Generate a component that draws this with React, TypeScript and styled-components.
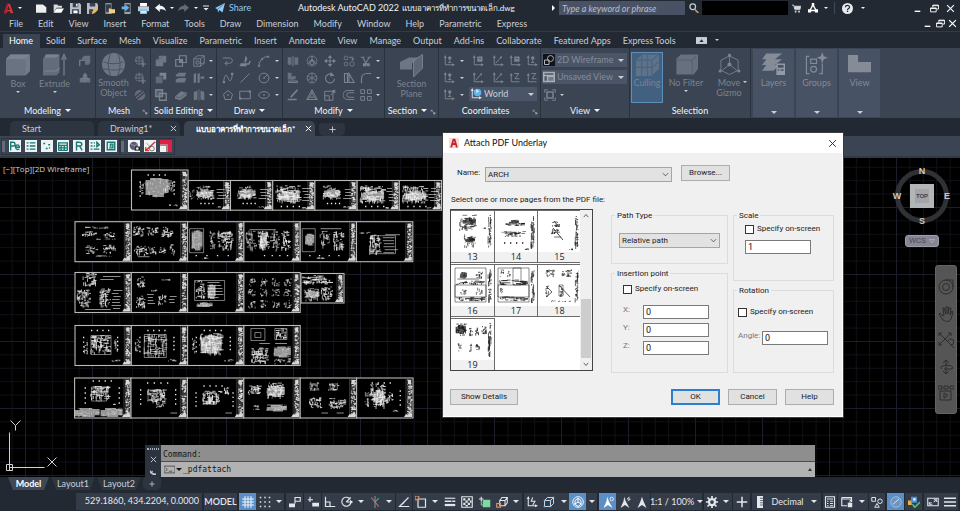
import React, { ReactNode } from "react";
import styled, { createGlobalStyle, css } from "styled-components";

const c = {
  frame: "#222933",
  ribbon: "#3b4453",
  tile: "#475264",
  field: "#4a5568",
  line: "#2a313d",
  text: "#c9ced6",
  bright: "#f1f3f5",
  dim: "#7b8390",
  blue: "#5b8fc7",
};

const ui = `Lato, "Noto Sans", sans-serif`;
const classic = `Roboto, "Liberation Sans", sans-serif`;

const Global = createGlobalStyle`
  *, *::before, *::after { box-sizing: border-box; }
  html, body { margin: 0; background: ${c.frame}; }
  body { font: 9px/12px ${ui}; color: ${c.text}; overflow: hidden; }
  button, input, select { font: inherit; color: inherit; margin: 0; padding: 0; border: 0; border-radius: 0; background: none; }
  a { color: inherit; text-decoration: none; }
  svg { display: block; flex: none; }
`;

/* ---------- icons ---------- */

const S = (p: { d: string; w?: number; k?: string }) => (
  <path d={p.d} fill="none" stroke={p.k || "currentColor"} strokeWidth={p.w || 1.3} />
);
const F = (p: { d: string; k?: string; o?: number }) => (
  <path d={p.d} fill={p.k || "currentColor"} opacity={p.o} />
);

const icons: Record<string, ReactNode> = {
  logo: <><F d="M1 15L6 1h4l5 14h-4l-1-3H6l-1 3z" k="#d8343a" /><F d="M8 4l-2 6h4z" k="#222933" /><F d="M1 15L6 1h2L4 15z" k="#a61f28" /></>,
  logoLight: <><rect width="16" height="16" fill="#f7dcd8" /><F d="M2 15L6 1h4l4 14h-3l-1-4H6l-1 4z" k="#c5222c" /><F d="M8 4l-1 4h2z" k="#f7dcd8" /></>,
  newDoc: <F d="M0 2h10l5 4v8H0z" k="#eceef0" />,
  open: <><F d="M1 14V2h5l2 2h5v3H5z" k="#d9dde0" /><F d="M5 8h11l-4 6H1z" k="#fff" /></>,
  save: <><F d="M0 0h14l2 2v14H0z" k="#b9bec5" /><path d="M4 0h8v6H4zM3 9h10v7H3z" fill="#39414e" /><F d="M9 1h2v4H9zM5 11h6v4H5z" k="#fff" /></>,
  saveAs: <><F d="M0 0h14l2 2v6l-8 8H0z" k="#b9bec5" /><path d="M4 0h8v5H4zM3 9h6v7H3z" fill="#39414e" /><F d="M7 16l1-4 6-5 2 3-5 5z" k="#e9b561" /></>,
  mobileOpen: <><F d="M2 0h9v16H2z" k="#8b929c" /><F d="M3 2h7v11H3z" k="#343c49" /><F d="M7 8h3l1 1h5v6H7z" k="#f1cf85" /></>,
  mobileSave: <><F d="M5 0h9v16H5z" k="#9aa2ac" /><F d="M6 2h7v11H6z" k="#343c49" /><F d="M1 5h5V2l6 5-6 5V9H1z" k="#63b7ee" /></>,
  print: <><F d="M3 0h10v5H3z" k="#fff" /><F d="M0 5h16v7H0z" k="#c5cad0" /><F d="M3 9h10v7H3z" k="#7dc2f2" /><F d="M4 12h8v2H4z" k="#fff" /></>,
  undo: <F d="M0 7l7-6v3c6 0 8 4 9 8-3-3-5-3-9-3v4z" k="#f2f4f6" />,
  redo: <F d="M16 7L9 1v3C3 4 1 8 0 12c3-3 5-3 9-3v4z" k="#616a77" />,
  qat: <><S d="M2 4h12" k="#e8ebee" w={2} /><F d="M3 8h10l-5 5z" k="#e8ebee" /></>,
  plane: <><F d="M0 8L16 0 12 15 7 11 5 15 4 10z" k="#8ecbf5" /><S d="M4 10L13 3" k="#31597a" w={1} /></>,
  search: <><circle cx="6" cy="6" r="4.5" fill="none" stroke="#c4c9d0" strokeWidth="2" /><S d="M9 10l6 6" k="#c9a06a" w={2.5} /></>,
  cart: <><S d="M0 2h3l2 8h9l2-6H4" k="#d5d9de" w={1.6} /><F d="M4 4h11l-1 5H5zM5 12h3v3H5zM11 12h3v3h-3z" k="#d5d9de" /></>,
  app: <><path d="M8 3L3 12h10z" fill="none" stroke="#fff" strokeWidth="2.2" /><F d="M6 0h4v5H6zM0 10h5v5H0zM11 10h5v5h-5z" k="#fff" /></>,
  help: <><circle cx="8" cy="8" r="8" fill="#e9ecef" /><S d="M5 6c0-4 6-3 6 0 0 2-3 2-3 4" k="#222933" w={1.8} /><F d="M7 11h2v2H7z" k="#222933" /></>,
  min: <S d="M3 13h10" k="#fff" w={2.4} />,
  restore: <><S d="M1 7h10v7H1zM1 8h10" k="#fff" w={1.6} /><S d="M5 6V2h10v7h-3M5 3h10" k="#fff" w={1.6} /></>,
  close: <S d="M2 2l12 12M14 2L2 14" k="currentColor" w={2.2} />,
  closeThin: <S d="M2 2l12 12M14 2L2 14" w={1.6} />,
  chev: <S d="M2 5l6 6 6-6" w={1.5} />,
  chevUp: <S d="M2 11l6-7 6 7" w={2.2} />,
  chevDn: <S d="M2 5l6 7 6-7" w={2.2} />,
  plus: <S d="M8 1v14M1 8h14" w={2} />,
  box: <><F d="M0 4l3-3h13v11l-3 3H0z" o={0.75} /><F d="M3 1h13l-3 3H0z" /><F d="M13 4l3-3v11l-3 3z" o={0.5} /></>,
  extrude: <><F d="M0 4l2-3h9v12l-2 2H0z" o={0.65} /><F d="M2 1h9L9 3H1z" /><S d="M1 12h8l2-2M14 15V3M12.500 4.500L14 1l1.500 3.500" w={0.8} /></>,
  solidA: <><F d="M4 4l3-3h8v9l-2 3H8V8H4z" o={0.7} /><S d="M1 15V7h4" w={1.5} /></>,
  solidB: <><F d="M8 1l3 3v3l4 2v5H1V9l4-2V4z" o={0.75} /><S d="M1 9h14M8 1v13" w={0.8} /></>,
  sphere: <><circle cx="8" cy="8" r="8" fill="currentColor" opacity=".8" /><path d="M1 6c4 2 10 2 14 0M1 11c4 1 10 1 14 0M6 0c-2 5-2 11 0 16M11 0c2 5 2 11 0 16" fill="none" stroke="#4b5462" strokeWidth=".7" /></>,
  sphereS: <><circle cx="7" cy="7" r="6" fill="currentColor" opacity=".65" /><path d="M1 5c4 2 8 2 12 0M1 10h12M5 1v12M9 1v12" fill="none" stroke="#3b4453" /><S d="M12 9v7M9 12h7" w={1.6} /></>,
  sphereT: <><circle cx="8" cy="8" r="7" fill="currentColor" opacity=".65" /><path d="M1 11L12 2M3 14L15 4" stroke="#3b4453" strokeWidth="2" /></>,
  union: <><F d="M5 1h10v9h-4v5H1V6h4z" o={0.8} /><S d="M1 6l3-2h4l3-2" k="#566070" w={0.8} /></>,
  subtract: <><F d="M6 1h9v9H11V5H6z" /><F d="M1 6h9v9H1z" o={0.6} /></>,
  intersect: <><S d="M6 1h9v9H6zM1 6h9v9H1z" w={1.6} /><F d="M6 6h4v4H6z" /></>,
  overlap: <><F d="M1 1h9v9H1z" o={0.45} /><S d="M1 1h9v9H1zM6 6h9v9H6z" w={1.8} /></>,
  slab: <><F d="M1 4l4-3h10l-2 5H1zM1 10l4-2h10l-2 6H1z" o={0.8} /></>,
  wedge: <><F d="M0 10l8-7 8 2-1 4-8 6-7-2z" o={0.85} /><S d="M1 10l6 2 8-7" k="#4a5361" w={0.9} /></>,
  wire: <><S d="M1 5h9v10H1zM6 1h9v10h-5M1 5l5-4M10 5l5-4M10 15l5-4M4 8h4v4H4z" w={1.2} /></>,
  faces: <F d="M1 3l3-2v13l-3 1zM6 3l3-2v13l-3 1zM10 6h5v3h-5z" o={0.85} />,
  split: <><F d="M1 4l5-2v12l-5 1zM10 2l5 2v11l-5-1z" o={0.8} /><S d="M8 0v16" w={0.8} /></>,
  pline: <S d="M1 4h9c5 0 5 7 0 7H4M7 8l-3 3 3 3" />,
  arcpt: <><F d="M9 0l2 5-2 5H7z" /><S d="M2 12h11l2-4M1 14h9" w={2} /></>,
  arc: <><S d="M1 15C2 6 7 2 14 2" /><F d="M0 13h3v3H0zM12 1h3v3h-3zM4 4h3v3H4z" o={0.7} /></>,
  spline: <><S d="M2 14C4 0 6 4 8 8s4 8 6-6" /><F d="M1 12h3v3H1zM12 1h3v3h-3z" /></>,
  line: <S d="M2 14L14 2" />,
  circle: <><circle cx="8" cy="8" r="6.500" fill="none" stroke="currentColor" strokeWidth="1.300" /><S d="M8 8l5-5" /><F d="M7 7h2v2H7z" /></>,
  polygon: <><S d="M8 2l6 5-2 7H4L2 7z" /><F d="M7 7h2v2H7z" /></>,
  rect: <><S d="M1 3h14v10H1z" /><F d="M0 11h3v3H0zM13 2h3v3h-3z" /></>,
  ellipse: <><ellipse cx="8" cy="8" rx="7" ry="4.500" fill="none" stroke="currentColor" strokeWidth="1.300" /><F d="M7 7h2v2H7z" /></>,
  mirror: <><F d="M1 3h5v10H1zM10 3h5v10h-5z" o={0.7} /><S d="M8 1v14" /></>,
  gizmo: <><circle cx="8" cy="8" r="6.500" fill="none" stroke="currentColor" strokeWidth="1" /><S d="M8 8V1M8 8l6 4M8 8l-6 4M5 8l3-2 3 2v3l-3 2-3-2z" /></>,
  globe: <><circle cx="8" cy="8" r="6.500" fill="none" stroke="currentColor" strokeWidth="1.200" /><S d="M8 1v14M2 5l12 6M2 11l12-6" w={1} /></>,
  tri: <><S d="M8 1l7 13H1zM8 5l3 6H5zM8 1v4M1 14l4-3M15 14l-4-3" /></>,
  align: <><F d="M1 1h5v9H1zM6 6l5-1 1 4-6 2z" o={0.7} /><S d="M2 12h12v2H2z" /></>,
  brush: <><S d="M14 1L5 11" w={2.4} /><S d="M1 14h12" w={2} /></>,
  move: <><S d="M8 2v12M2 8h12" /><F d="M8 0l3 4H5zM8 16l3-4H5zM0 8l4-3v6zM16 8l-4-3v6z" /></>,
  rotate: <><S d="M12 4a6 6 0 1 0 2 5" w={1.500} /><F d="M9 0l5 5-6 1z" /></>,
  scale: <><S d="M1 3h11v12H1zM1 9h6v6M9 8l4-4" /><F d="M15 1v5l-5-4z" /></>,
  copy: <><circle cx="4" cy="4" r="2.500" fill="none" stroke="currentColor" /><circle cx="4" cy="12" r="2.500" fill="none" stroke="currentColor" /><circle cx="12" cy="12" r="3" fill="none" stroke="currentColor" /><S d="M8 3h5v4M11 5l2 2 2-2" /></>,
  stretch: <><S d="M2 14V2h4v12zM8 2l7 12H8z" w={1.500} /></>,
  offset: <><S d="M15 2H6a6 6 0 0 0 0 12h9M15 5H8a3 3 0 0 0 0 6h7" /></>,
  trim: <><S d="M1 3h5M10 3h5M4 4l6 10M12 4L6 13" w={1.500} /><F d="M4 11h4v4H4zM9 11h4v4H9z" /></>,
  fillet: <><S d="M2 15V9c0-4 3-7 7-7h6" w={1.500} /></>,
  array: <S d="M1 1h5v5H1zM10 1h5v5h-5zM1 10h5v5H1zM10 10h5v5h-5z" />,
  plane3: <><F d="M0 6l6-3h6l-4 4v4H0z" o={0.8} /><F d="M9 5l6-4v9l-6 6z" o={0.55} /><S d="M9 5l6-4v9l-6 6z" w={0.600} /></>,
  ucs: <><S d="M3 2v11h11" /><F d="M3 0l2 4H1zM16 13l-4-2v4zM7 2h7v7H7z" /><path d="M9 4h3v1H9z" fill="#3b4453" /></>,
  ucsB: <><S d="M3 2v11h11" /><F d="M3 0l2 4H1zM16 13l-4-2v4z" /><circle cx="9" cy="4" r="2.300" fill="currentColor" /><S d="M9 6v4M7 10h4" /></>,
  ucsC: <><S d="M3 3v10h10M5 11l7-8" /><F d="M3 0l2 4H1zM16 13l-4-2v4zM13 1v4l-3-2z" /></>,
  ucsD: <><S d="M3 13h11M3 13V4M7 2h6l-5 7h6" /><F d="M3 1l2 4H1z" /></>,
  ucsWorld: <><S d="M3 2v11h11" k="#dfe3e7" /><F d="M3 0l2 4H1zM16 13l-4-2v4z" k="#dfe3e7" /><circle cx="10" cy="6" r="5" fill="#63b3ea" /><F d="M8 2l4 2-3 3z" k="#d7effc" /></>,
  vsWire: <><rect width="16" height="16" fill="#101317" /><S d="M2 8h6v6H2z" k="#b8bdc4" /><circle cx="10" cy="6" r="4" fill="none" stroke="#b8bdc4" strokeWidth="1.200" /></>,
  vsView: <><F d="M0 1h16v14H0z" k="#a9aeb5" /><F d="M2 3h12v2H2zM2 7h3v6H2z" k="#4a5568" /><F d="M7 8h7v5H7z" k="#737b87" /></>,
  viewport: <><S d="M4 4h8v8H4z" w={2} /><S d="M1 5V1h4M11 1h4v4M15 11v4h-4M5 15H1v-4" /></>,
  culling: <><F d="M0 5l4-4h12v10l-5 5H0z" o={0.500} /><path d="M0 5h11l5-4M11 5v11M4 1v15M8 1v15M0 10h11l5-4" stroke="#43668a" fill="none" strokeWidth=".8" /></>,
  filter: <><F d="M1 4l3-3h12v10l-3 4H1z" o={0.700} /><S d="M1 5h11l3-3M12 5v10" k="#596270" w={0.800} /></>,
  moveGizmo: <><S d="M8 2l6 3v7l-6 3-6-3V5zM8 8V2M8 8l-5 4M8 8l5 4" w={0.600} /><circle cx="8" cy="8" r="1.400" fill="currentColor" /><circle cx="8" cy="1.500" r="1.100" fill="currentColor" /><circle cx="1.500" cy="12.500" r="1.100" fill="currentColor" /><circle cx="14.500" cy="12.500" r="1.100" fill="currentColor" /></>,
  layers: <><F d="M3 1h11L9 5H0zM3 5h11L9 9H0zM3 9h9l-4 4H0z" /><F d="M10 8h6v8h-6z" k="#949aa4" /><path d="M11 9h4v2h-4zM11 12h1v1h-1zM13 12h2v1h-2z" fill="#475264" /></>,
  groups: <><S d="M3 3H1v12h2M10 15h2V8" w={0.800} /><S d="M4 5h4v3H4z" w={0.800} /><circle cx="6" cy="12" r="2" fill="none" stroke="currentColor" strokeWidth=".8" /><F d="M12 0l1 3 3 1-3 1-1 3-1-3-3-1 3-1z" /></>,
  viewTile: <F d="M0 2h7v5h9v7H0z" />,
  media: <><rect y="3" width="16" height="10" fill="#c9ced6" /><F d="M5 10l3-4 3 4z" k="#222933" /></>,
  launcher: <S d="M3 3h4M3 3v4M6 6l7 7M13 8v5H8" w={1.600} />,
  ruler: <><F d="M4 0h8v16H4z" k="#e6e9ec" /><path d="M8 3h4M8 6h4M8 9h4M8 12h4" stroke="#3b4453" /></>,
  grid: <S d="M4 0v16M8 0v16M12 0v16M0 4h16M0 8h16M0 12h16" k="#fff" w={1.200} />,
  snap: <F d="M1 1h2v2H1zM7 1h2v2H7zM13 1h2v2h-2zM1 7h2v2H1zM7 7h2v2H7zM13 7h2v2h-2zM1 13h2v2H1zM7 13h2v2H7zM13 13h2v2h-2z" />,
  infer: <><S d="M8 2h7v5H8zM8 7v3" w={1.500} /><F d="M0 10h8v5H0z" /></>,
  dyn: <><S d="M4 1v7M1 5h7" w={1.500} /><F d="M7 9h9v5H7z" /></>,
  ortho: <S d="M2 1v13h13M2 8h6v6" w={1.600} />,
  polar: <><S d="M11 3a6 6 0 1 0 2 6M7 8h8M7 8l6-6" w={1.500} /><F d="M16 8l-4-3v6z" /></>,
  iso: <><S d="M3 2l10 12" k="#d46a5f" w={1.500} /><S d="M13 3L8 8" k="#4ca36f" w={1.500} /><S d="M8 0v16" k="#8d95a0" /></>,
  angle: <S d="M14 2L2 14h13M6 11l4-5" w={1.600} />,
  osnap: <><S d="M4 4h10v11H4z" w={1.600} /><rect x="0" y="0" width="5" height="5" fill="none" stroke="#e0936a" strokeWidth="1.500" /></>,
  lw: <><S d="M1 3h14" w={1.500} /><S d="M1 7h9M11 7h4" w={2} /><S d="M1 12h14" w={3} /></>,
  transp: <><S d="M1 1h14v14H1z" w={1.500} /><F d="M3 3h3v3H3zM9 3h3v3H9zM6 6h3v3H6zM3 9h3v3H3zM9 9h3v3H9zM12 6h2v3h-2zM6 12h3v2H6z" /></>,
  cycle: <><S d="M3 1v6M0 4h6" k="#dfe3e7" w={1.500} /><F d="M5 5h10v10H5z" k="#7fd9a0" /><S d="M3 7v5h3" k="#7fd9a0" /></>,
  osnap3: <><S d="M5 6h7v7H5zM5 6l3-4h7l-3 4M15 2v7l-3 4" w={1.400} /><rect x="1" y="10" width="5" height="5" fill="none" stroke="#e0936a" strokeWidth="1.500" /></>,
  dynUcs: <><S d="M3 3v10h11M9 2l-2 5h5l-3 5" w={1.400} /><F d="M3 0l2 4H1zM16 13l-4-2v4z" /></>,
  cubeFilter: <><S d="M2 6h8v8H2zM2 6l4-4h8l-4 4M14 2v8l-4 4" w={1.200} /><F d="M1 5h2v2H1zM1 13h2v2H1zM9 5h2v2H9zM13 1h2v2h-2zM9 13h2v2H9z" k="#6fb6ee" /></>,
  giz: <S d="M8 1a7 7 0 1 0 .1 0M8 3v5l5 3M8 8l-5 3M4 6l4-3 4 3v5l-4 3-4-3z" k="#fff" w={1.300} />,
  annoA: <><F d="M7 1l2 6 5 9-6-4-6 4 4-9z" k="#fff" /><circle cx="13" cy="4" r="2.300" fill="none" stroke="#fff" /></>,
  annoB: <><F d="M7 1l2 6 5 9-6-4-6 4 4-9z" /><S d="M14 1l-3 3h4l-3 3" /></>,
  annoC: <F d="M8 1l2 6 4 9-6-4-6 4 4-9z" />,
  gear: <><circle cx="8" cy="8" r="4" fill="none" stroke="currentColor" strokeWidth="3" /><S d="M8 0v3M8 13v3M0 8h3M13 8h3M2 2l3 3M11 11l3 3M14 2l-3 3M5 11l-3 3" w={2.300} /></>,
  qprops: <><S d="M2 1h12v14H2z" w={1.500} /><S d="M4 4h8M4 7h2M8 7h4M4 10h2M8 10h4M4 13h2M8 13h4" /></>,
  lockUi: <><S d="M1 2h13v6M1 2v11h7M1 4h13" w={1.500} /><F d="M9 9h6v6H9z" /><S d="M12 9V6h3" /></>,
  isolate: <><S d="M1 2h5v5H1zM8 10l3 5H5z" /><circle cx="12" cy="7" r="3" fill="none" stroke="currentColor" strokeWidth="1.300" /></>,
  perf: <><circle cx="8" cy="8" r="7" fill="#6d95c0" stroke="#b4c8dd" /><S d="M4 11l8-7" k="#dbe6f0" /></>,
  trusted: <><F d="M0 6h5v6H0z" k="#e5b04c" /><F d="M4 1h8v8H4z" k="#4d8fd6" /><F d="M7 3h3v3H7z" k="#fff" /><S d="M6 11l3 4 7-7" k="#51c06e" w={2.200} /></>,
  full: <><S d="M1 3h14v10H1z" w={1.400} /><S d="M9 5h4v3M13 5L9 8M3 8v3h4M3 11l3-3" /></>,
  menu: <S d="M0 3h16M0 8h16M0 13h16" w={2} />,
  prompt: <><S d="M0 2h16v12H0z" k="#444" /><S d="M2 5l3 3-3 3M7 11h5" k="#444" /></>,
  wrench: <F d="M2 2v6l6 4h6v-3l-7-1 1-5-3 2z" />,
};

const Icon = ({ n, s = 12, w }: { n: string; s?: number; w?: number }) => (
  <svg width={w || s} height={s} viewBox="0 0 16 16" preserveAspectRatio={w ? "none" : undefined} aria-hidden="true">{icons[n]}</svg>
);

const Caret = styled.span<{ $s?: number }>`
  width: 0; height: 0; flex: none;
  border: ${(p) => p.$s || 3}px solid transparent;
  border-top-color: currentColor;
  border-bottom-width: 0;
`;

/* ---------- frame ---------- */

const Shell = styled.div`
  display: flex; flex-direction: column;
  min-height: 100vh; position: relative; background: ${c.frame};
`;

const TitleBar = styled.header`
  display: flex; align-items: center; height: 16px;
  color: ${c.bright}; white-space: nowrap; padding-right: 2px;
`;
const IconButton = styled.button<{ $w: number; $bg?: string }>`
  width: ${(p) => p.$w}px; flex: none; align-self: stretch;
  display: flex; align-items: center; justify-content: center;
  ${(p) => p.$bg && css`background: ${p.$bg};`}
`;
const Gap = styled.span<{ $w: number }>`width: ${(p) => p.$w}px; flex: none;`;
const Quick = styled.div`display: flex; align-items: center; align-self: stretch; width: 298px;`;
const ShareLink = styled.a`display: flex; align-items: center; gap: 4px; color: #8ecbf5; margin-left: 1px;`;
const Caption = styled.h1`
  flex: 1; margin: 0; font: inherit; display: flex; gap: 3px; line-height: 16px;
`;
const FileName = styled.span`font-size: 8px;`;
const SearchBox = styled.input`
  width: 126px; height: 14px; background: #485264; padding: 0 3px; font-style: italic;
  &::placeholder { color: #b9bfc8; opacity: 1; }
`;
const Redacted = styled.div`width: 86px; height: 14px; background: #000;`;
const VRule = styled.span`width: 1px; height: 12px; background: #414a58;`;

const MenuBar = styled.nav`
  display: flex; align-items: center; height: 16px; padding: 0 2px 0 9px; gap: 15px;
  border-bottom: 1px solid #323a46;
`;
const Push = styled.div`margin-left: auto; display: flex; align-self: stretch; color: #fff;`;
const TabStrip = styled.nav`display: flex; align-items: flex-end; height: 16px; padding: 0 3px; white-space: nowrap;`;
const RibbonTab = styled.button<{ $on?: boolean }>`
  height: 14px; padding: 0 6px; line-height: 14px;
  ${(p) => p.$on && css`background: ${c.ribbon}; color: #fff; padding: 0 7px 0 6px;`}
`;

/* ---------- ribbon ---------- */

const Ribbon = styled.section`display: flex; height: 70px; background: ${c.ribbon}; color: ${c.dim};`;
const Panel = styled.div<{ $w: number }>`
  width: ${(p) => p.$w}px; flex: none; display: flex; flex-direction: column;
  border-right: 1px solid ${c.line}; padding-top: 4px;
`;
const PanelBody = styled.div<{ $pad?: number }>`display: flex; flex: 1; padding-left: ${(p) => p.$pad || 0}px;`;
const PanelName = styled.div<{ $launch?: boolean }>`
  height: 15px; display: flex; align-items: center; justify-content: center; gap: 4px;
  padding-right: ${(p) => (p.$launch ? 8 : 0)}px;
  color: ${c.bright}; white-space: nowrap; position: relative;
`;
const Launch = styled.button`position: absolute; right: 2px; bottom: 3px; color: ${c.text};`;
const Big = styled.button<{ $w: number; $on?: boolean }>`
  width: ${(p) => p.$w}px; flex: none; display: flex; flex-direction: column; align-items: center;
  line-height: 10px; padding-top: 1px; gap: 2px; position: relative; height: 51px; white-space: nowrap;
  ${(p) => p.$on && css`background: #42607f; border: 1px solid #5d8fbd; padding-top: 0;`}
  ${Caret} { color: ${c.text}; }
`;
const SideCaret = styled.span`position: absolute; right: 2px; bottom: 9px;`;
const Cells = styled.div<{ $cols: string }>`
  display: grid; grid-template-columns: ${(p) => p.$cols}; grid-auto-rows: 17px; align-content: start;
`;
const Cell = styled.button<{ $lit?: boolean }>`
  display: flex; align-items: center; justify-content: center;
  ${(p) => p.$lit && css`color: ${c.text};`}
`;
const Picker = styled.label<{ $w: number; $lit?: boolean }>`
  width: ${(p) => p.$w}px; height: 14px; background: ${c.field}; margin: 1px 0 2px;
  display: flex; align-items: center; gap: 2px; padding: 0 3px 0 1px;
  color: ${(p) => (p.$lit ? c.text : "#858d9a")};
  select { flex: 1; min-width: 0; appearance: none; outline: 0; }
  ${Caret} { color: ${c.text}; }
`;
const Stack = styled.div`display: flex; flex-direction: column;`;
const Row = styled.div`display: flex; height: 17px;`;
const Tile = styled.button`
  width: 41px; margin: 1px 0 1px 2px; background: ${c.tile}; flex: none;
  display: flex; flex-direction: column; align-items: center; padding: 3px 0 3px; gap: 2px; color: #858c97;
  ${Caret} { margin-top: auto; color: ${c.text}; }
`;

type PanelSpec = { name: string; w: number; arrow?: boolean; launch?: boolean; pad?: number; children: ReactNode };
const RibbonPanel = ({ name, w, arrow, launch, pad, children }: PanelSpec) => (
  <Panel $w={w}>
    <PanelBody $pad={pad}>{children}</PanelBody>
    <PanelName $launch={launch}>
      {name}{arrow && <Caret />}
      {launch && <Launch aria-label={`${name} settings`}><Icon n="launcher" s={6} /></Launch>}
    </PanelName>
  </Panel>
);
const IconCells = ({ cols, items }: { cols: string; items: string[] }) => (
  <Cells $cols={cols}>
    {items.map((n, i) => n === "v"
      ? <Cell key={i} $lit aria-label="More"><Caret $s={2} /></Cell>
      : <Cell key={i} aria-label={n}><Icon n={n} /></Cell>)}
  </Cells>
);

/* ---------- document tabs and small toolbar ---------- */

const DocTabs = styled.nav`display: flex; align-items: flex-end; height: 18px; padding-left: 10px;`;
const DocTab = styled.div<{ $w: number; $on?: boolean }>`
  width: ${(p) => p.$w}px; height: 15px; margin-right: 4px; padding: 0 3px 0 12px;
  display: flex; align-items: center; justify-content: space-between;
  border-radius: 5px 5px 0 0; white-space: nowrap;
  background: ${(p) => (p.$on ? c.ribbon : "#2d3541")};
  ${(p) => p.$on && css`color: #fff; font-weight: 700; font-size: 8px;`}
`;
const AddTab = styled.button<{ $w: number }>`
  width: ${(p) => p.$w}px; height: 13px; display: flex; align-items: center; justify-content: center;
  background: #2d3541; border-radius: 3px 3px 5px 5px;
`;
const ToolRow = styled.div`display: flex; align-items: center; height: 22px; background: ${c.ribbon}; border-bottom: 2px solid #313947; padding-left: 1px;`;
const ToolGroup = styled.div`
  display: flex; align-items: center; gap: 4px; height: 17px; padding: 0 2px 0 0; border: 1px solid #2c3440;
`;
const Grip = styled.span`width: 3px; height: 11px; background: #626b79;`;
const ToolButton = styled.button`width: 12px; height: 12px; background: #eef4f3; display: grid; place-items: center; color: #147a74;`;

const toolArt: ReactNode[] = [
  <path d="M1 15V2h4c4 0 4 6 0 6H1M9 10h6c0-5-6-5-6 0 0 4 4 4 6 3" />,
  <path d="M1 3h3M6 3h9M1 8h3M6 8h9M1 13h3M6 13h9" />,
  <path d="M2 4h3M10 6h3M6 12h3M11 11h2" />,
  <path d="M1 3h14M1 7h14M1 11h14M1 15h14M5 7v8M10 7v8M15 2v13M1 2v13" />,
  <path d="M4 15V2h4c6 0 6 6 0 6H4M9 8l4 7" />,
  <path d="M1 3h3M6 3h2M1 8h3M6 8h2M1 13h3M6 13h9M11 2l4 4-4 3z" />,
  <path d="M2 2h12v12H2zM5 11h6V5H7v3h2" />,
];

/* ---------- drawing ---------- */

const Canvas = styled.main`position: relative; flex: 1; min-height: 300px; background: #000; overflow: hidden;`;
const Scene = styled.svg`position: absolute; inset: 0; width: 100%; height: 100%;`;

const random = (seed: number) => () => {
  seed = (seed + 0x6d2b79f5) | 0;
  let t = Math.imul(seed ^ (seed >>> 15), 1 | seed);
  t = (t + Math.imul(t ^ (t >>> 7), 61 | t)) ^ t;
  return ((t ^ (t >>> 14)) >>> 0) / 4294967296;
};
const f = (n: number) => n.toFixed(1);

// f hatch, s light strokes, d dense strokes, b outline, l leaders, o dots
type Mark = ["f" | "s" | "d" | "b" | "l" | "o", number, number, number, number];

const strokes = (r: () => number, x: number, y: number, w: number, h: number, n: number) => {
  let d = "";
  for (let i = 0; i < n; i++) {
    const px = x + r() * w * 0.9, py = y + r() * h * 0.9;
    d += r() > 0.5
      ? `M${f(px)} ${f(py)}h${f(Math.min(x + w - px, 1 + r() * w * 0.22))}`
      : `M${f(px)} ${f(py)}v${f(Math.min(y + h - py, 1 + r() * h * 0.22))}`;
  }
  return d;
};

const drawMark = ([k, x, y, w, h]: Mark, i: number, r: () => number, ink: string) => {
  if (k === "f") return (
    <g key={i}>
      <path d={`M${x} ${y + 2}h${w * 0.2}v-2h${w * 0.5}v1h${w * 0.3}v${h * 0.7}h${-w * 0.2}v${h * 0.2}h${-w * 0.5}v${-h * 0.1}h${-w * 0.3}z`} fill={ink} opacity=".62" />
      <path d={strokes(r, x, y, w, h, 26)} stroke={ink} strokeWidth=".5" opacity=".7" />
    </g>
  );
  if (k === "b") return <path key={i} d={`M${x} ${y}h${w}v${h}h${-w}z`} fill="none" stroke={ink} strokeWidth=".7" opacity=".7" />;
  if (k === "o") {
    let d = "";
    for (let j = 0; j < 4; j++) d += `M${f(x + (w * j) / 3)} ${f(y + (h * j) / 3)}h1.300`;
    return <path key={i} d={d} stroke={ink} strokeWidth="1.300" />;
  }
  if (k === "l") {
    let d = "";
    for (let j = 0; j < h; j += 3) d += `M${f(x + r() * 3)} ${y + j}h${f(w * (0.6 + r() * 0.35))}`;
    return <path key={i} d={d} stroke={ink} strokeWidth=".8" opacity=".75" />;
  }
  const n = Math.round((w * h) / (k === "d" ? 5 : 7)) + 6;
  return <path key={i} d={strokes(r, x, y, w, h, n)} fill="none" stroke={ink} strokeWidth={k === "d" ? 0.8 : 0.7} opacity={k === "d" ? 0.9 : 0.8} />;
};

const Sheet = ({ x, y, w, h, marks, seed }: { x: number; y: number; w: number; h: number; marks: Mark[]; seed: number }) => {
  const r = random(seed * 7919 + 13);
  return (
    <g transform={`translate(${x} ${y})`}>
      <rect width={w} height={h} fill="#000" stroke="#b9bab6" strokeWidth="1.100" />
      <path d={`M${w - 7} .5v${h - 1}`} stroke="#777" strokeWidth=".5" />
      <rect x={w - 6} y="1" width="5" height={h - 2} fill="#8d8d8d" opacity=".4" />
      <path d={Array.from({ length: h * 2 }, () => `M${f(w - 6 + r() * 4)} ${f(2 + r() * (h - 4))}h${f(0.6 + r() * 1.4)}`).join("")} stroke="#ececec" strokeWidth=".8" fill="none" />
      <path d={`M${w - 5} 2h3v4h-3zM${w - 9} ${h - 1}l2-3 2 1 2-3 2 2v3z`} fill="#d8d8d8" />
      {marks.map((m, i) => drawMark(m, i, r, "#efefef"))}
    </g>
  );
};

const plan: Mark[] = [["o", 16, 5, 17, 0], ["o", 8, 12, 0, 14], ["o", 42, 12, 0, 12], ["s", 37, 34, 9, 2]];
const elev: Mark[] = [["f", 9, 9, 16, 8], ["d", 7, 10, 19, 9], ["s", 8, 5, 14, 5], ["l", 28, 9, 9, 12], ["o", 12, 23, 12, 0], ["s", 28, 26, 7, 1]];
const longElev: Mark[] = [["f", 5, 11, 22, 9], ["d", 3, 5, 26, 18], ["l", 29, 8, 8, 15], ["o", 8, 26, 18, 0], ["s", 28, 27, 8, 1]];
const matrix: Mark[] = [3, 13, 25].flatMap((y) => [4, 16, 28, 40].map((x): Mark => ["s", x, y + 3, 8, 8]));

const sheetRows: { x: number; y: number; w: number; h: number; sheets: Mark[][] }[] = [
  { x: 131.5, y: 12, w: 56.5, h: 40, sheets: [[["f", 14, 8, 23, 20], ["s", 8, 12, 5, 13], ["s", 33, 10, 11, 13], ...plan]] },
  { x: 188.3, y: 22.500, w: 42.200, h: 29.700, sheets: [[["s", 1, 9, 5, 10], ...elev], elev, longElev, elev, longElev, longElev] },
  { x: 75, y: 63.700, w: 56.300, h: 40, sheets: [
    [["d", 7, 10, 15, 5], ["d", 28, 11, 13, 5], ["s", 10, 24, 13, 9], ["d", 28, 23, 13, 9], ["s", 10, 5, 24, 2], ["s", 18, 17, 24, 1], ["s", 20, 34, 24, 1]],
    [["d", 1, 4, 12, 11], ["d", 15, 6, 12, 8], ["d", 30, 5, 12, 11], ["d", 3, 24, 14, 10], ["s", 17, 24, 9, 9], ["d", 28, 26, 7, 6], ["s", 38, 22, 6, 12], ["l", 4, 35, 14, 1]],
    [["f", 4, 9, 11, 21], ["b", 2, 7, 14, 24], ["s", 22, 8, 6, 22], ["d", 30, 9, 16, 20], ["o", 8, 34, 32, 0], ["s", 13, 36, 14, 1]],
    [["s", 2, 8, 11, 22], ["f", 16, 12, 7, 15], ["d", 14, 9, 12, 20], ["s", 26, 8, 10, 22], ["d", 37, 9, 10, 20], ["l", 3, 8, 40, 1], ["o", 20, 34, 23, 0]],
    [["b", 2, 7, 13, 23], ["f", 5, 12, 9, 12], ["s", 20, 9, 10, 18], ["d", 33, 9, 11, 20], ["l", 18, 7, 24, 1], ["o", 9, 34, 29, 0], ["s", 15, 36, 11, 1]],
    [["s", 3, 10, 11, 2], ["d", 13, 13, 12, 21], ["l", 26, 13, 16, 20], ["b", 14, 14, 25, 18]],
  ] },
  { x: 75, y: 114.500, w: 56.300, h: 40, sheets: [
    [["d", 8, 1, 14, 13], ["d", 2, 17, 14, 18], ["d", 24, 15, 12, 20], ["l", 36, 18, 11, 19], ["l", 25, 4, 22, 6], ["l", 8, 37, 33, 2]],
    [["d", 6, 4, 8, 11], ["d", 5, 22, 9, 14], ["d", 27, 22, 8, 11], ["l", 15, 22, 8, 11], ["l", 37, 24, 8, 8], ["s", 30, 7, 9, 1], ["s", 18, 17, 8, 2]],
    [["b", 7, 8, 30, 20], ["d", 8, 11, 10, 15], ["l", 18, 10, 18, 18], ["f", 20, 12, 8, 15], ["f", 9, 30, 16, 4], ["s", 7, 8, 8, 2]],
    matrix,
  ] },
  { x: 301, y: 115.500, w: 43, h: 29.500, sheets: [[["d", 1, 2, 31, 9], ["f", 5, 17, 13, 7], ["s", 2, 15, 17, 13], ["d", 20, 13, 12, 14]]] },
  { x: 75, y: 167.500, w: 56.300, h: 40, sheets: [
    [["d", 15, 10, 21, 19], ["b", 16, 10, 20, 19], ["s", 9, 13, 4, 16], ["s", 39, 13, 4, 14], ...plan],
    [["b", 13, 9, 22, 23], ["b", 17, 14, 15, 14], ["s", 12, 8, 24, 24], ["s", 4, 12, 4, 16], ...plan],
    [["f", 13, 10, 21, 19], ["d", 12, 8, 24, 22], ["s", 4, 12, 4, 16], ...plan],
    [["b", 7, 3, 14, 12], ["b", 11, 7, 6, 5], ["d", 31, 3, 12, 11], ["b", 31, 3, 12, 11], ["d", 7, 22, 18, 17], ["l", 14, 18, 12, 3], ["f", 30, 21, 17, 11], ["s", 30, 33, 17, 6], ["l", 31, 18, 17, 2]],
  ] },
  { x: 74.600, y: 220, w: 56.400, h: 40, sheets: [
    [["b", 17, 9, 15, 14], ["b", 22, 9, 5, 14], ["d", 16, 8, 20, 14], ["o", 18, 3, 18, 0], ["o", 10, 10, 0, 15], ["o", 44, 10, 0, 15], ["s", 38, 25, 5, 2], ["f", 0, 30, 25, 9], ["f", 26, 30, 22, 9]],
    [["b", 17, 12, 13, 10], ["b", 23, 12, 7, 10], ["d", 16, 11, 20, 15], ["s", 23, 25, 10, 5], ["o", 16, 5, 20, 0], ["o", 9, 12, 0, 14], ["o", 44, 12, 0, 14], ["l", 37, 35, 10, 1]],
    [["b", 16, 15, 13, 11], ["b", 22, 15, 7, 11], ["d", 15, 13, 20, 15], ["d", 36, 9, 6, 10], ["o", 16, 8, 18, 0], ["o", 8, 15, 0, 13], ["o", 45, 15, 0, 13], ["l", 37, 35, 9, 1]],
    [["d", 4, 7, 14, 10], ["b", 8, 9, 6, 6], ["f", 23, 8, 18, 11], ["d", 24, 5, 16, 16], ["s", 9, 27, 8, 5], ["f", 23, 27, 20, 6], ["l", 22, 27, 20, 1]],
    [["b", 11, 6, 6, 6], ["s", 9, 4, 10, 9], ["b", 30, 6, 7, 6], ["s", 28, 4, 11, 9], ["d", 9, 19, 13, 12], ["d", 29, 20, 17, 11], ["l", 19, 35, 9, 1], ["l", 36, 35, 8, 1]],
    [["f", 17, 12, 10, 13], ["d", 13, 6, 16, 25], ["d", 27, 14, 10, 12], ["s", 8, 12, 5, 17], ["o", 15, 5, 18, 0], ["o", 43, 13, 0, 14], ["s", 35, 32, 8, 2]],
  ] },
];

const DrawingScene = () => (
  <Scene aria-label="Drawing area">
    <defs>
      <pattern id="minor" width="13.400" height="13.400" x="25" y="49" patternUnits="userSpaceOnUse">
        <path d="M0 .5h14M.5 0v14" stroke="#101118" />
      </pattern>
      <pattern id="major" width="67" height="67" x="25" y="49" patternUnits="userSpaceOnUse">
        <path d="M0 .5h67M.5 0v67" stroke="#1c1d2b" />
      </pattern>
    </defs>
    <rect width="100%" height="100%" fill="url(#minor)" />
    <rect width="100%" height="100%" fill="url(#major)" />
    {sheetRows.map((row, j) => row.sheets.map((m, i) => (
      <Sheet key={`${j}-${i}`} x={row.x + i * row.w} y={row.y} w={row.w} h={row.h} marks={m} seed={j * 10 + i + 1} />
    )))}
    <g fill="none" stroke="#d2d2d2" strokeWidth="1">
      <path d="M9.500 274.500v38M6.500 306.500h6v6h-6zM9.500 309.500h35M10.500 262.500l5 5 5-5M15.500 267.500v5M47.500 299.500l9 9M56.500 299.500l-9 9" />
    </g>
  </Scene>
);

const ViewLabel = styled.div`position: relative; padding: 4px 3px; color: #d0d0d0; font: 8px/13px "Open Sans", sans-serif;`;
const CubeArea = styled.div`
  position: absolute; top: 5px; right: 3px; width: 70px;
  display: flex; flex-direction: column; align-items: center; gap: 6px;
`;
const Wcs = styled.button`
  width: 34px; height: 12px; border-radius: 3px; background: #858691; border: 1px solid #9c9daa; color: #4b4c57;
  font: 8px/10px ${classic}; display: flex; align-items: center; justify-content: space-evenly;
`;
const NavBar = styled.div`
  position: absolute; right: 3px; top: 107px; width: 22px; height: 149px; border-radius: 3px;
  background: #555; border: 1px solid #646464; color: #2c2c2c;
  display: flex; flex-direction: column; align-items: center; justify-content: space-between; padding: 13px 0 12px;
`;
const NavButton = styled.button`display: block;`;

const navArt: ReactNode[] = [
  <><circle cx="8" cy="8" r="7" /><circle cx="8" cy="8" r="3.500" /><path d="M8 1h7v7" /></>,
  <path d="M4 9L2 7l-1 1 4 6c3 2 7 2 8-1l2-7-1-1-2 4 1-7h-2l-1 6V1H8v7L6 2H5l1 8z" />,
  <><path d="M1 1l12 12M13 1L1 13M4 1H1v3M10 1h3v3M1 10v3h3" /><path d="M10 9a3 3 0 1 1 3 4l3 3" /></>,
  <><path d="M8 1v14M5 4l3-3 3 3M5 12l3 3 3-3" /><path d="M4 10c-6-4 14-6 10 0H6" /></>,
  <><path d="M0 1h4v3H0zM6 1h4v3H6zM12 1h4v3h-4zM2 6h11v9H2zM6 8l4 2.500-4 2.500z" /></>,
];

const CommandDock = styled.div`
  position: absolute; left: 145px; right: 145px; bottom: 0; height: 32px; display: flex;
  font: 8px/12px "DejaVu Sans Mono", "Liberation Mono", monospace; color: #151515;
`;
const DockGrip = styled.div`
  width: 16px; background: #2b333f; color: #c4c8ce; overflow: hidden;
  display: flex; flex-direction: column; align-items: center; gap: 6px; padding-top: 3px;
`;
const GripDots = styled.span`width: 12px; height: 3px; border-block: 1px dotted #aab0b8;`;
const DockBody = styled.div`flex: 1; display: flex; flex-direction: column;`;
const History = styled.div`height: 16px; background: #8e8e8e; padding: 4px 2px 0; line-height: 12px;`;
const Prompt = styled.label`
  flex: 1; background: #b2b2b2; border-top: 1px solid #4d4d4d; display: flex; align-items: center; padding: 0 3px; gap: 1px;
  input { flex: 1; outline: 0; min-width: 0; }
`;
const UpCaret = styled.span`border: 2px solid transparent; border-bottom: 3px solid #333; border-top: 0;`;

/* ---------- bottom bars ---------- */

const LayoutTabs = styled.nav`display: flex; height: 15px; padding-left: 8px; align-items: flex-start;`;
const LayoutTab = styled.button<{ $w: number; $on?: boolean }>`
  width: ${(p) => p.$w}px; height: 13px; line-height: 12px; margin-right: 2px;
  clip-path: polygon(0 0, 100% 0, calc(100% - 5px) 100%, 5px 100%);
  background: ${(p) => (p.$on ? "#3f4857" : "#2d3541")};
  ${(p) => p.$on && css`color: #fff; font-weight: 700;`}
`;
const Status = styled.footer`
  display: flex; justify-content: flex-end; height: 19px; padding: 1px 2px; color: #e4e7ea; white-space: nowrap;
`;
const Coords = styled.output`
  flex: 0 1 126px; background: #343c4a; text-align: right; padding-right: 3px; margin-right: 2px; line-height: 16px;
`;
const Seg = styled.div<{ $gap: number }>`display: flex; margin-right: ${(p) => p.$gap}px; background: #343c4a; flex: none;`;
const TextButton = styled.button<{ $w: number; $bold?: boolean }>`
  width: ${(p) => p.$w}px; font-weight: ${(p) => (p.$bold ? 600 : 400)}; display: flex; align-items: center; justify-content: center; gap: 3px;
`;

type StatusItem = [string, number, boolean?];
const statusA: [number, StatusItem[]][] = [
  [2, [["grid", 17, true], ["snap", 17], ["v", 11]]],
  [1, [["infer", 17]]],
  [1, [["dyn", 17]]],
  [0, [["ortho", 16], ["polar", 17], ["v", 12]]],
  [1, [["iso", 16], ["v", 12]]],
  [1, [["angle", 16]]],
  [0, [["osnap", 16], ["v", 12]]],
  [2, [["lw", 17], ["transp", 18], ["cycle", 18], ["osnap3", 16], ["v", 12]]],
  [2, [["dynUcs", 16], ["cubeFilter", 18], ["v", 11], ["giz", 17, true], ["v", 11]]],
  [1, [["annoA", 17, true], ["annoB", 17], ["annoC", 17]]],
];
const statusB: [number, StatusItem[]][] = [
  [1, [["gear", 16], ["v", 12]]],
  [2, [["plus", 17]]],
];
const statusC: [number, StatusItem[]][] = [
  [1, [["qprops", 14]]],
  [1, [["lockUi", 18], ["v", 12]]],
  [2, [["isolate", 16]]],
  [1, [["perf", 17, true]]],
  [2, [["trusted", 17]]],
  [0, [["full", 18], ["menu", 16]]],
];
const Segments = ({ list }: { list: [number, StatusItem[]][] }) => (
  <>
    {list.map(([gap, items], i) => (
      <Seg key={i} $gap={gap}>
        {items.map(([n, w, on], j) => (
          <IconButton key={j} $w={w} $bg={on ? c.blue : undefined} aria-label={n === "v" ? "Options" : n}>
            {n === "v" ? <Caret /> : <Icon n={n} s={12} />}
          </IconButton>
        ))}
      </Seg>
    ))}
  </>
);

/* ---------- dialog ---------- */

const Dialog = styled.section`
  position: absolute; left: 443px; top: 133px; width: 400px; background: #f0f0f0; color: #222;
  font: 8px/10px ${classic}; box-shadow: 0 0 0 1px #3c3c3c; border-right: 1px solid #fff; border-bottom: 1px solid #fff;
`;
const DialogTitle = styled.header`
  height: 20px; background: #fff; padding: 0 5px 0 6px; display: flex; align-items: center; gap: 5px;
  h2 { flex: 1; margin: 0; font: 9px/20px ${ui}; color: #111; }
`;
const DialogBody = styled.div`padding: 12px 8px 11px 7px;`;
const NameRow = styled.div`
  display: flex; gap: 9px; align-items: flex-start; padding-left: 7px;
  > label { width: 19px; padding-top: 3px; white-space: nowrap; }
  > div { margin-top: 2px; }
`;
const SelectShell = styled.div<{ $w: number }>`
  width: ${(p) => p.$w}px; display: grid; align-items: center; height: 15px; background: #e2e2e2; border: 1px solid #a5a5a5;
  select, svg { grid-area: 1 / 1; }
  select { width: 100%; height: 100%; appearance: none; padding-left: 2px; outline: 0; }
  svg { justify-self: end; margin-right: 2px; pointer-events: none; }
`;
const Btn = styled.button<{ $w: number; $default?: boolean }>`
  width: ${(p) => p.$w}px; height: 16px; background: #e1e1e1; flex: none;
  border: ${(p) => (p.$default ? "2px solid #2a7fd0" : "1px solid #adadad")};
`;
const ListLabel = styled.p`margin: 13px 0 4px 1px; line-height: 10px;`;
const Columns = styled.div`display: flex; align-items: flex-start; height: 163px;`;
const PageList = styled.div`
  width: 143px; flex: none; margin-right: 18px; height: 162px; border: 1px solid #444; background: #fff; display: flex; overflow: hidden;
`;
const Pages = styled.div`
  flex: 1; min-width: 0; overflow: hidden; display: grid; grid-template-columns: 44px 43px 44px; grid-auto-rows: 53px; align-content: start; gap: 1px 0;
`;
const Page = styled.button`
  display: flex; flex-direction: column; align-items: center; border: 1px solid #6b6b6b; border-left-width: 0; background: #fff;
  overflow: hidden;
  span { width: 100%; flex: 1; background: #f1f1f1; font: 9px/10px "Open Sans", sans-serif; }
`;
const ScrollTrack = styled.div`
  width: 12px; flex: none; background: #f0f0f0; display: flex; flex-direction: column; align-items: center; color: #444;
  button { height: 12px; }
`;
const Thumb = styled.div`margin-top: auto; width: 10px; height: 59px; background: #cdcdcd;`;
const GroupCol = styled.div<{ $w?: number }>`
  display: flex; flex-direction: column; gap: 5px; padding-top: 2px;
  ${(p) => (p.$w ? css`width: ${p.$w}px; margin-right: 5px; flex: none;` : css`flex: 1;`)}
`;
const Group = styled.fieldset<{ $h: number; $pad: number }>`
  height: ${(p) => p.$h}px; margin: 0; padding: 0 0 0 ${(p) => p.$pad}px; border: 1px solid #dcdcdc; min-width: 0;
  legend { margin-left: ${(p) => 3 - p.$pad}px; padding: 0 2px; line-height: 9px; }
`;
const Inset = styled.div`padding-top: 13px;`;
const Check = styled.label<{ $top: number }>`
  display: flex; align-items: center; gap: 3px; margin-top: ${(p) => p.$top}px; white-space: nowrap;
  input { appearance: none; width: 9px; height: 9px; border: 1px solid #333; background: #fff; flex: none; }
`;
const FieldRow = styled.label<{ $top: number; $label: number }>`
  display: grid; grid-template-columns: ${(p) => p.$label}px 66px; margin-top: ${(p) => p.$top}px; color: #777;
  input { height: 14px; min-width: 0; border: 1px solid #7a7a7a; background: #fff; color: #111; padding: 0 2px; font: 9px/12px ${classic}; }
`;
const Actions = styled.footer`
  display: flex; gap: 8px; margin-top: 17px;
  > :first-child { margin-right: auto; }
`;

const pageMarks: Mark[][] = [
  [["f", 11, 7, 13, 6], ["s", 7, 4, 18, 16], ["f", 14, 26, 9, 5], ["s", 12, 23, 12, 14], ["s", 31, 16, 3, 2]],
  [["d", 10, 12, 20, 3], ["l", 8, 13, 20, 3], ["d", 10, 21, 20, 5], ["s", 7, 20, 24, 3], ["f", 14, 9, 10, 3], ["o", 9, 32, 18, 0], ["s", 30, 37, 4, 2]],
  [["d", 13, 11, 6, 5], ["d", 12, 20, 4, 3], ["s", 13, 13, 8, 10], ["l", 14, 26, 10, 3], ["s", 30, 37, 4, 2]],
  [["b", 3, 3, 31, 34], ["f", 8, 7, 7, 6], ["d", 24, 7, 7, 7], ["l", 3, 14, 30, 2], ["d", 4, 16, 29, 4], ["b", 3, 20, 31, 12], ["s", 8, 24, 8, 6], ["s", 24, 23, 7, 7], ["d", 4, 32, 29, 4]],
  [["b", 3, 3, 31, 34], ["s", 5, 5, 4, 7], ["s", 12, 6, 4, 6], ["d", 4, 15, 29, 5], ["b", 3, 20, 31, 12], ["b", 18, 3, 8, 17], ["s", 5, 23, 3, 6], ["d", 4, 32, 29, 4]],
  [["d", 7, 5, 9, 7], ["d", 23, 5, 10, 7], ["s", 6, 20, 4, 12], ["s", 20, 20, 5, 12], ["b", 20, 20, 4, 11], ["s", 12, 35, 20, 2]],
  [["d", 4, 5, 11, 12], ["f", 4, 6, 10, 9], ["d", 17, 9, 4, 9], ["d", 23, 9, 4, 8], ["d", 30, 7, 5, 10], ["s", 6, 24, 4, 9], ["s", 17, 24, 3, 9], ["d", 24, 24, 4, 8]],
];
const PageThumb = ({ marks, seed }: { marks: Mark[]; seed: number }) => {
  const r = random(seed * 104729);
  return (
    <svg width="42" height="41" viewBox="0 0 42 41" aria-hidden="true">
      {marks.map((m, i) => drawMark(m, i, r, "#151515"))}
      {seed === 18 && <path d="M7 21l6 6-6 5M20 20l11 12" stroke="#333" fill="none" strokeWidth=".8" />}
      {seed === 15 && <path d="M15 10l5 6M14 17l10 12" stroke="#333" fill="none" strokeWidth=".9" />}
      <path d={strokes(r, 36, 4, 3.500, 34, 34)} stroke="#222" strokeWidth=".7" />
    </svg>
  );
};

const AttachDialog = () => (
  <Dialog role="dialog" aria-labelledby="dlg">
    <DialogTitle>
      <Icon n="logoLight" s={10} /><h2 id="dlg">Attach PDF Underlay</h2>
      <button aria-label="Close"><Icon n="closeThin" s={9} /></button>
    </DialogTitle>
    <DialogBody>
      <NameRow>
        <label htmlFor="pdf">Name:</label>
        <SelectShell $w={187}><select id="pdf"><option>ARCH</option></select><Icon n="chev" s={7} /></SelectShell>
        <Btn $w={49}>Browse...</Btn>
      </NameRow>
      <ListLabel id="pages">Select one or more pages from the PDF file:</ListLabel>
      <Columns>
        <PageList role="group" aria-labelledby="pages">
          <Pages>
            {pageMarks.map((m, i) => <Page key={i}><PageThumb marks={m} seed={i + 13} /><span>{i + 13}</span></Page>)}
          </Pages>
          <ScrollTrack>
            <button aria-label="Scroll up"><Icon n="chevUp" s={6} /></button>
            <Thumb />
            <button aria-label="Scroll down"><Icon n="chevDn" s={6} /></button>
          </ScrollTrack>
        </PageList>
        <GroupCol $w={117}>
          <Group $h={53} $pad={7}>
            <legend>Path Type</legend>
            <Inset><SelectShell $w={101}><select aria-label="Path type"><option>Relative path</option></select><Icon n="chev" s={7} /></SelectShell></Inset>
          </Group>
          <Group $h={104} $pad={11}>
            <legend>Insertion point</legend>
            <Check $top={6}><input type="checkbox" />Specify on-screen</Check>
            <FieldRow $top={11} $label={20}>X:<input defaultValue="0" /></FieldRow>
            <FieldRow $top={4} $label={20}>Y:<input defaultValue="0" /></FieldRow>
            <FieldRow $top={4} $label={20}>Z:<input defaultValue="0" /></FieldRow>
          </Group>
        </GroupCol>
        <GroupCol>
          <Group $h={70} $pad={11}>
            <legend>Scale</legend>
            <Check $top={4}><input type="checkbox" />Specify on-screen</Check>
            <FieldRow $top={6} $label={0}><span /><input aria-label="Scale" defaultValue="1" /></FieldRow>
          </Group>
          <Group $h={87} $pad={4}>
            <legend>Rotation</legend>
            <Check $top={12}><input type="checkbox" />Specify on-screen</Check>
            <FieldRow $top={14} $label={24}>Angle:<input defaultValue="0" /></FieldRow>
          </Group>
        </GroupCol>
      </Columns>
      <Actions>
        <Btn $w={68}>Show Details</Btn>
        <Btn $w={49} $default>OK</Btn>
        <Btn $w={49}>Cancel</Btn>
        <Btn $w={49}>Help</Btn>
      </Actions>
    </DialogBody>
  </Dialog>
);

/* ---------- page ---------- */

const menus = ["File", "Edit", "View", "Insert", "Format", "Tools", "Draw", "Dimension", "Modify", "Window", "Help", "Parametric", "Express"];
const tabs = ["Home", "Solid", "Surface", "Mesh", "Visualize", "Parametric", "Insert", "Annotate", "View", "Manage", "Output", "Add-ins", "Collaborate", "Featured Apps", "Express Tools"];
const quick = ["newDoc", "open", "save", "saveAs", "mobileOpen", "mobileSave", "print", "undo"];

export default function App() {
  return (
    <Shell>
      <Global />
      <TitleBar>
        <Quick>
          <IconButton $w={17} aria-label="Application menu"><Icon n="logo" s={11} /></IconButton>
          <IconButton $w={6} aria-label="More"><Caret $s={2} /></IconButton>
          <Gap $w={10} />
          {quick.map((n) => <IconButton key={n} $w={17} aria-label={n}><Icon n={n} s={11} /></IconButton>)}
          <IconButton $w={6} aria-label="Undo list"><Caret $s={2} /></IconButton>
          <IconButton $w={17} aria-label="Redo"><Icon n="redo" s={11} /></IconButton>
          <IconButton $w={7} aria-label="Redo list"><Caret $s={2} /></IconButton>
          <IconButton $w={13} aria-label="Customize"><Icon n="qat" s={8} /></IconButton>
          <Gap $w={2} />
          <ShareLink href="#share"><Icon n="plane" s={10} />Share</ShareLink>
        </Quick>
        <Caption><span>Autodesk AutoCAD 2022</span><FileName>แบบอาคารที่ทำการขนาดเล็ก.dwg</FileName></Caption>
        <IconButton $w={10} aria-label="Expand search"><svg width="4" height="6"><path d="M0 0l3 3-3 3z" fill="#fff" /></svg></IconButton>
        <SearchBox aria-label="Search" placeholder="Type a keyword or phrase" />
        <IconButton $w={17} aria-label="Search"><Icon n="search" s={10} /></IconButton>
        <Redacted />
        <IconButton $w={17} aria-label="Cart"><Icon n="cart" s={9} /></IconButton>
        <IconButton $w={16} aria-label="Apps"><Icon n="app" s={10} /></IconButton>
        <IconButton $w={10} aria-label="Apps list"><Caret $s={2} /></IconButton>
        <Gap $w={3} />
        <VRule />
        <IconButton $w={25} aria-label="Help"><Icon n="help" s={11} /></IconButton>
        <IconButton $w={6} aria-label="Help list"><Caret $s={2} /></IconButton>
        <Gap $w={42} />
        <IconButton $w={18} aria-label="Minimize"><Icon n="min" s={9} /></IconButton>
        <IconButton $w={17} aria-label="Restore"><Icon n="restore" s={9} /></IconButton>
        <IconButton $w={15} aria-label="Close"><Icon n="close" s={9} /></IconButton>
      </TitleBar>
      <MenuBar>
        {menus.map((m) => <a key={m} href={`#${m}`}>{m}</a>)}
        <Push>
          <IconButton $w={13} aria-label="Minimize drawing"><Icon n="min" s={9} /></IconButton>
          <IconButton $w={13} aria-label="Restore drawing"><Icon n="restore" s={9} /></IconButton>
          <IconButton $w={11} aria-label="Close drawing"><Icon n="close" s={9} /></IconButton>
        </Push>
      </MenuBar>
      <TabStrip>
        {tabs.map((t, i) => <RibbonTab key={t} $on={i === 0}>{t}</RibbonTab>)}
        <Gap $w={8} />
        <IconButton $w={24} aria-label="Ribbon display"><Icon n="media" s={11} /></IconButton>
        <IconButton $w={6} aria-label="Ribbon options"><Caret $s={2} /></IconButton>
      </TabStrip>

      <Ribbon>
        <RibbonPanel name="Modeling" w={96} arrow>
          <Big $w={36}><Icon n="box" s={24} />Box<Caret $s={2} /></Big>
          <Big $w={37}><Icon n="extrude" s={24} />Extrude<Caret $s={2} /></Big>
          <IconCells cols="24px" items={["solidA", "solidB"]} />
        </RibbonPanel>
        <RibbonPanel name="Mesh" w={55} launch>
          <Big $w={35}><Icon n="sphere" s={23} />Smooth<br />Object</Big>
          <IconCells cols="18px" items={["sphereS", "sphereS", "sphereT"]} />
        </RibbonPanel>
        <RibbonPanel name="Solid Editing" w={66} arrow>
          <IconCells cols="20px 19px 17px 8px" items={["union", "intersect", "wire", "v", "subtract", "slab", "faces", "v", "overlap", "wedge", "split", "v"]} />
        </RibbonPanel>
        <RibbonPanel name="Draw" w={66} arrow pad={2}>
          <IconCells cols="17px 18px 19px 8px" items={["pline", "arcpt", "arc", "v", "spline", "line", "circle", "v", "polygon", "rect", "ellipse", "v"]} />
        </RibbonPanel>
        <RibbonPanel name="Modify" w={102} arrow>
          <IconCells cols="19px 19px 18px 19px 16px 8px" items={["mirror", "gizmo", "move", "copy", "trim", "v", "align", "globe", "rotate", "stretch", "fillet", "v", "brush", "tri", "scale", "offset", "array", "v"]} />
        </RibbonPanel>
        <RibbonPanel name="Section" w={54} arrow launch>
          <Big $w={53}><Icon n="plane3" s={24} />Section<br />Plane</Big>
        </RibbonPanel>
        <RibbonPanel name="Coordinates" w={102} launch>
          <Stack>
            <IconCells cols="20px 6px 25px 16px 18px 16px" items={["ucsB", "v", "ucs", "ucsC", "ucs", "ucsB", "ucsB", "v", "ucsC", "ucsC", "ucsD", "ucsD"]} />
            <Row>
              <IconCells cols="20px 6px" items={["ucsB", "v"]} />
              <Gap $w={4} />
              <Picker $w={68} $lit><Icon n="ucsWorld" s={12} /><select aria-label="UCS"><option>World</option></select><Caret /></Picker>
            </Row>
          </Stack>
        </RibbonPanel>
        <RibbonPanel name="View" w={89} arrow pad={1}>
          <Stack>
            <Picker $w={85}><Icon n="vsWire" /><select aria-label="Visual style"><option>2D Wireframe</option></select><Caret /></Picker>
            <Picker $w={85}><Icon n="vsView" /><select aria-label="Named view"><option>Unsaved View</option></select><Caret /></Picker>
            <IconCells cols="16px 8px" items={["viewport", "v"]} />
          </Stack>
        </RibbonPanel>
        <RibbonPanel name="Selection" w={121} pad={1}>
          <Big $w={32} $on><Icon n="culling" s={23} />Culling</Big>
          <Big $w={46}><Icon n="filter" s={23} />No Filter<Caret $s={2} /></Big>
          <Big $w={40}><Icon n="moveGizmo" s={23} />Move<br />Gizmo<SideCaret><Caret $s={2} as="i" /></SideCaret></Big>
        </RibbonPanel>
        <Tile><Icon n="layers" s={23} />Layers<Caret /></Tile>
        <Tile><Icon n="groups" s={23} />Groups<Caret /></Tile>
        <Tile><Icon n="viewTile" s={23} />View<Caret /></Tile>
      </Ribbon>

      <DocTabs>
        <DocTab $w={84}>Start</DocTab>
        <DocTab $w={82}>Drawing1*<button aria-label="Close Drawing1"><Icon n="close" s={7} /></button></DocTab>
        <DocTab $w={131} $on>แบบอาคารที่ทำการขนาดเล็ก*<button aria-label="Close drawing"><Icon n="close" s={7} /></button></DocTab>
        <AddTab $w={26} aria-label="New drawing"><Icon n="plus" s={7} /></AddTab>
      </DocTabs>
      <ToolRow>
        <ToolGroup>
          <Grip />
          {toolArt.map((a, i) => (
            <ToolButton key={i} aria-label={`Tool ${i + 1}`}>
              <svg width="10" height="10" viewBox="0 0 16 16" fill="none" stroke="currentColor" strokeWidth="2.200">{a}</svg>
            </ToolButton>
          ))}
        </ToolGroup>
        <ToolGroup>
          <Grip />
          <ToolButton aria-label="Render"><svg width="11" height="11" viewBox="0 0 16 16"><circle cx="7" cy="7" r="6" fill="#5b5878" /><path d="M2 4l6 3 5-4M8 7v6" stroke="#b6b2cf" fill="none" /><path d="M8 8h8v6H8z" fill="#222" /><circle cx="12" cy="11" r="2" fill="#ddd" /></svg></ToolButton>
          <ToolButton aria-label="Measure"><svg width="11" height="11" viewBox="0 0 16 16" fill="none"><path d="M1 14L15 1M1 9v5h5" stroke="#d33" strokeWidth="2" /><circle cx="10" cy="11" r="3.500" stroke="#444" /><path d="M2 3l4 4" stroke="#777" /></svg></ToolButton>
          <ToolButton aria-label="Corner"><svg width="12" height="12" viewBox="0 0 16 16"><path d="M0 0h16v16h-6V6H0z" fill="#dd2146" /><path d="M0 7h9v9" stroke="#444" fill="none" /></svg></ToolButton>
        </ToolGroup>
      </ToolRow>

      <Canvas>
        <DrawingScene />
        <ViewLabel>[−][Top][2D Wireframe]</ViewLabel>
        <CubeArea>
          <svg width="70" height="66" viewBox="0 0 70 66" fontFamily="Liberation Sans" fontWeight="bold" textAnchor="middle">
            <circle cx="35" cy="33" r="24.500" fill="none" stroke="#303134" strokeWidth="5" />
            <rect x="23" y="21" width="24" height="24" fill="#b4b5b6" />
            <rect x="28" y="26" width="14" height="14" fill="#a3a5aa" />
            <text x="35" y="35" fontSize="6" fill="#43454c">TOP</text>
            <g fontSize="9" fill="#c9cacc"><text x="35" y="11">N</text><text x="35" y="61">S</text><text x="10" y="36">W</text><text x="60" y="36">E</text></g>
          </svg>
          <Wcs>WCS<svg width="6" height="4"><path d="M.5 .5h5L3 3.500z" fill="none" stroke="#b8b9c4" strokeWidth=".7" /></svg></Wcs>
        </CubeArea>
        <NavBar>
          {navArt.map((a, i) => (
            <NavButton key={i} aria-label={`Navigation ${i + 1}`}>
              <svg width="16" height="16" viewBox="0 0 16 16" fill="none" stroke="currentColor">{a}</svg>
            </NavButton>
          ))}
        </NavBar>
        <CommandDock>
          <DockGrip><GripDots /><Icon n="close" s={7} /><Icon n="wrench" s={8} /></DockGrip>
          <DockBody>
            <History>Command:</History>
            <Prompt><Icon n="prompt" s={9} w={11} /><Caret $s={3} /><input aria-label="Command" defaultValue="_pdfattach" /><UpCaret /></Prompt>
          </DockBody>
        </CommandDock>
      </Canvas>

      <LayoutTabs>
        <LayoutTab $w={41} $on>Model</LayoutTab>
        <LayoutTab $w={44}>Layout1</LayoutTab>
        <LayoutTab $w={44}>Layout2</LayoutTab>
        <AddTab $w={18} aria-label="New layout"><Icon n="plus" s={6} /></AddTab>
      </LayoutTabs>
      <Status>
        <Coords>529.1860, 434.2204, 0.0000</Coords>
        <Seg $gap={2}><TextButton $w={33} $bold>MODEL</TextButton></Seg>
        <Segments list={statusA} />
        <Seg $gap={2}><TextButton $w={51}>1:1 / 100%<Caret /></TextButton></Seg>
        <Segments list={statusB} />
        <Seg $gap={2}>
          <IconButton $w={16} aria-label="Units"><Icon n="ruler" /></IconButton>
          <TextButton $w={39}>Decimal</TextButton>
          <IconButton $w={14} aria-label="Units list"><Caret /></IconButton>
        </Seg>
        <Segments list={statusC} />
      </Status>
      <AttachDialog />
    </Shell>
  );
}
